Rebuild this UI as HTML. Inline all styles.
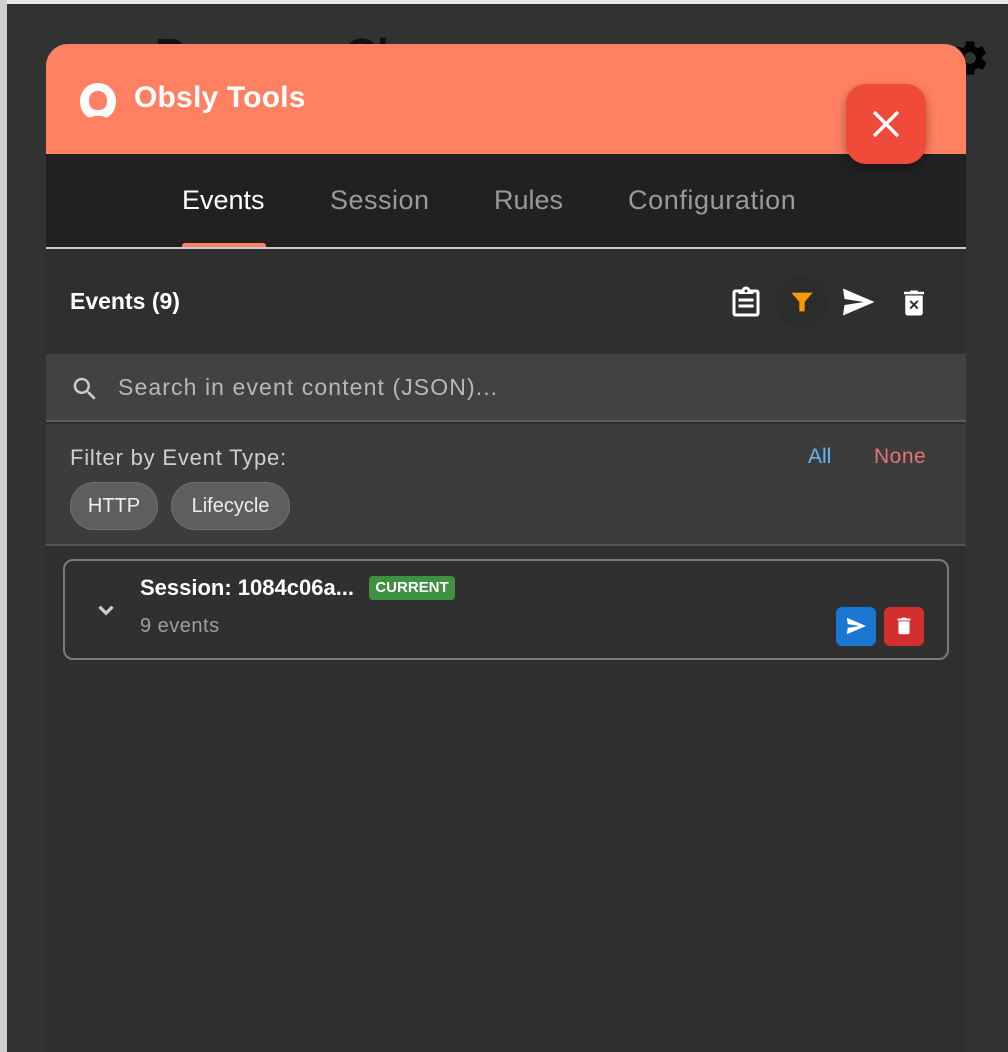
<!DOCTYPE html>
<html><head><meta charset="utf-8"><style>
*{margin:0;padding:0;box-sizing:border-box}
body{width:1008px;height:1052px;overflow:hidden;background:#313232;font-family:"Liberation Sans",sans-serif;position:relative}
.a{position:absolute;white-space:nowrap}
</style></head><body>
<div class="a" style="left:0;top:0;width:1008px;height:4px;background:#e8e8e8"></div>
<div class="a" style="left:0;top:0;width:7px;height:1052px;background:#cfcfcf"></div>
<div class="a" style="left:7px;top:4px;width:1001px;height:1048px;background:#313232"></div>
<div class="a" style="left:155px;top:30px;font-size:44px;font-weight:bold;color:#111">P</div>
<div class="a" style="left:345px;top:30px;font-size:44px;font-weight:bold;color:#111">Ch</div>
<svg class="a" style="left:950px;top:38px" width="40" height="40" viewBox="0 0 24 24"><path fill="#000" d="M19.4 13c.04-.3.1-.7.1-1s-.03-.7-.1-1l2.1-1.6c.2-.15.2-.4.1-.6l-2-3.5c-.1-.2-.4-.3-.6-.2l-2.5 1c-.5-.4-1.1-.7-1.700-1L14.5 2.4c0-.2-.3-.4-.5-.4h-4c-.2 0-.5.2-.5.4l-.4 2.7c-.6.3-1.2.6-1.7 1l-2.5-1c-.2-.1-.5 0-.6.2l-2 3.5c-.1.2-.1.5.1.6L4.6 11c0 .3-.1.7-.1 1s0 .7.1 1l-2.1 1.6c-.2.2-.2.4-.1.6l2 3.5c.1.2.4.3.6.2l2.5-1c.5.4 1.1.7 1.7 1l.4 2.7c0 .2.3.4.5.4h4c.2 0 .5-.2.5-.4l.4-2.7c.6-.3 1.2-.6 1.7-1l2.5 1c.2.1.5 0 .6-.2l2-3.5c.1-.2.1-.5-.1-.6zM12 15.5a3.5 3.5 0 110-7 3.5 3.5 0 010 7z"/></svg>

<div class="a" style="left:46px;top:44px;width:920px;height:1008px;background:#2f2f2f;border-radius:22px 22px 0 0;overflow:hidden">
  <div class="a" style="left:0;top:0;width:920px;height:110px;background:#ff8162"></div>
  <svg class="a" style="left:33px;top:38px" width="38" height="38" viewBox="0 0 38 38"><path fill="#fff" fill-rule="evenodd" d="M19 1C9 1 1 9 1 19c0 7 3 13 8 16 2 1 4 0 6-1h8c2 1 4 2 6 1 5-3 8-9 8-16C37 9 29 1 19 1zM19 9c6 0 9 4 9 10s-3 9-9 9-9-3-9-9 3-10 9-10z"/></svg>
  <div class="a" style="left:88px;top:37px;font-size:30px;font-weight:bold;color:#fff;letter-spacing:0.2px">Obsly Tools</div>
  <div class="a" style="left:814px;top:42px;font-size:22px;color:#ffb29e">v1.0.0</div>
  <div class="a" style="left:0;top:110px;width:920px;height:94px;background:#212121"></div>
  <div class="a" style="left:136px;top:141px;font-size:27px;color:#fff">Events</div>
  <div class="a" style="left:284px;top:141px;font-size:27px;color:#9a9a9a;letter-spacing:0.5px">Session</div>
  <div class="a" style="left:448px;top:141px;font-size:27px;color:#9a9a9a">Rules</div>
  <div class="a" style="left:582px;top:141px;font-size:27px;color:#9a9a9a;letter-spacing:0.6px">Configuration</div>
  <div class="a" style="left:136px;top:199px;width:84px;height:6px;background:#ff8162;border-radius:3px 3px 0 0"></div>
  <div class="a" style="left:0;top:203px;width:920px;height:2px;background:#c9cbd2"></div>

  <div class="a" style="left:24px;top:244px;font-size:23px;font-weight:bold;color:#fff">Events (9)</div>
  <svg class="a" style="left:682px;top:241px" width="36" height="36" viewBox="0 0 24 24"><path fill="#fff" d="M19 3h-4.2C14.4 1.8 13.3 1 12 1s-2.4.8-2.8 2H5c-1.1 0-2 .9-2 2v14c0 1.1.9 2 2 2h14c1.1 0 2-.9 2-2V5c0-1.1-.9-2-2-2zm-7 0c.6 0 1 .4 1 1s-.4 1-1 1-1-.4-1-1 .4-1 1-1zm7 16H5V5h2v1h10V5h2zM7 9h10v2H7zm0 4h10v2H7z"/></svg>
  <div class="a" style="left:730px;top:232px;width:52px;height:52px;border-radius:50%;background:#2b2c2c"></div>
  <svg class="a" style="left:740px;top:242px" width="32" height="32" viewBox="0 0 24 24"><path fill="#ff9800" d="M4 5h16l-6 7v7h-4v-7z"/></svg>
  <svg class="a" style="left:794px;top:240px" width="36" height="36" viewBox="0 0 24 24"><path fill="#fff" d="M2 21l21-9L2 3l1 7 13 2-13 2z"/></svg>
  <svg class="a" style="left:853px;top:244px" width="30" height="30" viewBox="0 0 24 24"><path fill="#fff" d="M15 3V2H9v1H4v2h16V3zM5 6v14c0 1.1.9 2 2 2h10c1.1 0 2-.9 2-2V6zm9.5 11L12 14.5 9.5 17 8.4 15.9l2.5-2.5-2.5-2.5 1.1-1.1 2.5 2.5 2.5-2.5 1.1 1.1-2.5 2.5 2.5 2.5z"/></svg>

  <div class="a" style="left:0;top:310px;width:920px;height:68px;background:#424242;border-bottom:2px solid #5a5a5a"></div>
  <svg class="a" style="left:24px;top:330px" width="30" height="30" viewBox="0 0 24 24"><path fill="#ccc" d="M15.5 14h-.8l-.3-.3A6.5 6.5 0 109.5 16a6.5 6.5 0 004.2-1.6l.3.3v.8l5 5 1.5-1.5zm-6 0a4.5 4.5 0 110-9 4.5 4.5 0 010 9z"/></svg>
  <div class="a" style="left:72px;top:330px;font-size:23px;color:#b8b8b8;letter-spacing:1.1px">Search in event content (JSON)...</div>

  <div class="a" style="left:0;top:380px;width:920px;height:122px;background:#3c3c3c;border-bottom:2px solid #555"></div>
  <div class="a" style="left:24px;top:401px;font-size:22px;color:#cfcfcf;letter-spacing:0.8px">Filter by Event Type:</div>
  <div class="a" style="left:762px;top:401px;font-size:21px;color:#64b5f6">All</div>
  <div class="a" style="left:828px;top:401px;font-size:21px;color:#e57373;letter-spacing:0.5px">None</div>
  <div class="a" style="left:24px;top:438px;width:88px;height:48px;border-radius:24px;background:#5e5e5e;border:1px solid #707070;color:#eee;font-size:20px;text-align:center;line-height:46px">HTTP</div>
  <div class="a" style="left:125px;top:438px;width:119px;height:48px;border-radius:24px;background:#5e5e5e;border:1px solid #707070;color:#eee;font-size:20px;text-align:center;line-height:46px">Lifecycle</div>

  <div class="a" style="left:17px;top:515px;width:886px;height:101px;border:2px solid #7a7a7a;border-radius:10px;background:#303030"></div>
  <svg class="a" style="left:47px;top:553px" width="26" height="26" viewBox="0 0 24 24"><path fill="none" stroke="#ccc" stroke-width="3" d="M6 9l6 6 6-6"/></svg>
  <div class="a" style="left:94px;top:531px;font-size:22px;font-weight:bold;color:#fff">Session: 1084c06a...</div>
  <div class="a" style="left:323px;top:532px;width:86px;height:24px;background:#3d9140;border-radius:4px;color:#fff;font-size:15px;font-weight:bold;text-align:center;line-height:24px">CURRENT</div>
  <div class="a" style="left:94px;top:571px;font-size:20px;color:#9e9e9e;letter-spacing:0.5px">9 events</div>
  <div class="a" style="left:790px;top:563px;width:40px;height:39px;background:#1976d2;border-radius:6px"></div>
  <svg class="a" style="left:799px;top:571px" width="22" height="22" viewBox="0 0 24 24"><path fill="#fff" d="M2 21l21-9L2 3l1 7 13 2-13 2z"/></svg>
  <div class="a" style="left:838px;top:563px;width:40px;height:39px;background:#d32f2f;border-radius:6px"></div>
  <svg class="a" style="left:847px;top:571px" width="22" height="22" viewBox="0 0 24 24"><path fill="#fff" d="M6 19c0 1.1.9 2 2 2h8c1.1 0 2-.9 2-2V7H6zM19 4h-3.5l-1-1h-5l-1 1H5v2h14z"/></svg>
</div>

<div class="a" style="left:846px;top:84px;width:80px;height:80px;background:#f04a3a;border-radius:20px;box-shadow:0 4px 10px rgba(0,0,0,0.35)"></div>
<svg class="a" style="left:870px;top:108px" width="32" height="32" viewBox="0 0 24 24"><path stroke="#fff" stroke-width="2.6" d="M3 3l18 18M21 3L3 21"/></svg>
</body></html>
